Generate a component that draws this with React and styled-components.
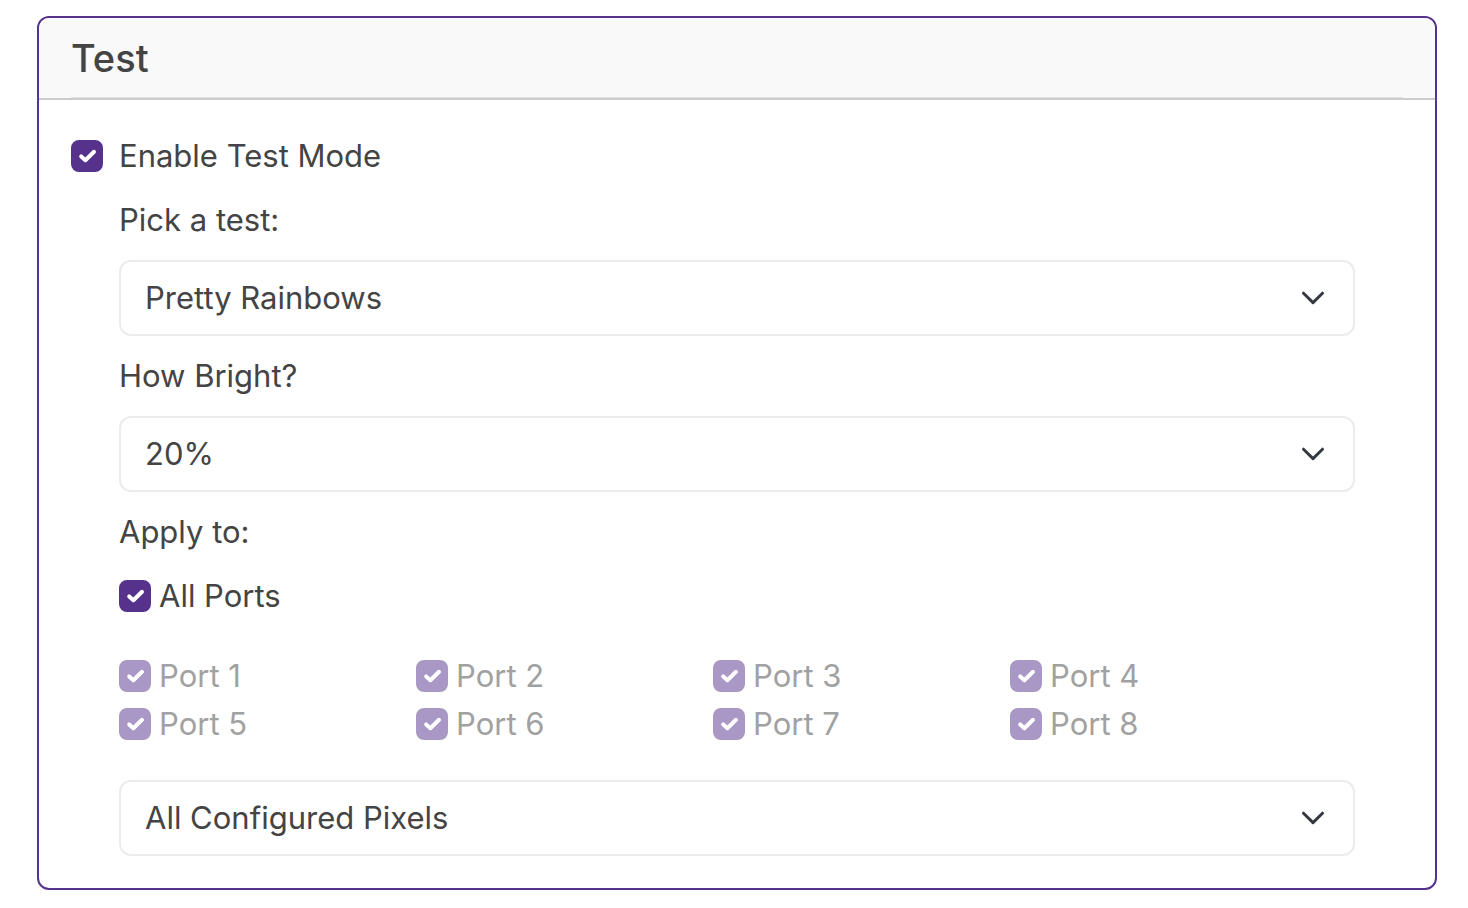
import React, { useState } from "react";
import styled, { createGlobalStyle, css } from "styled-components";

const GlobalStyle = createGlobalStyle`
  *, *::before, *::after { box-sizing: border-box; }
  body {
    margin: 0;
    background: #fff;
    color: #444;
    font-family: Inter, "Liberation Sans", sans-serif;
    font-size: 31px;
    line-height: 48px;
  }
`;

const Page = styled.main`
  padding: 16px 31px 16px 37px;
`;

const Card = styled.section`
  border: 2px solid #56328c;
  border-radius: 12px;
  background: #fff;
  overflow: hidden;
`;

const CardHeader = styled.header`
  padding: 16px 32px 0;
  background: #f9f9f9;
  border-bottom: 2px solid #ccc;
`;

const Title = styled.h1`
  margin: 0;
  padding-bottom: 15px;
  border-bottom: 1px solid #e2e2e2;
  font-size: 38px;
  line-height: 48px;
  font-weight: 500;
`;

const CardBody = styled.form`
  padding: 32px;
`;

const Settings = styled.div`
  padding: 16px 48px 0;
  display: flex;
  flex-direction: column;
`;

const Field = styled.div`
  display: flex;
  flex-direction: column;
  gap: 16px;
  margin-bottom: 16px;
`;

const FieldLabel = styled.label`
  display: block;
`;

const SelectBox = styled.div`
  display: grid;
  align-items: center;

  > * { grid-area: 1 / 1; }
`;

const Select = styled.select`
  appearance: none;
  width: 100%;
  height: 76px;
  padding: 0 72px 0 24px;
  border: 2px solid #ececec;
  border-radius: 12px;
  background: #fff;
  color: inherit;
  font: inherit;
`;

const Chevron = styled.svg`
  width: 24px;
  height: 24px;
  margin-right: 30px;
  justify-self: end;
  pointer-events: none;
`;

const CheckRow = styled.label`
  display: flex;
  align-items: center;
  gap: ${(p) => (p.$wide ? 16 : 8)}px;
  ${(p) => p.$disabled && css`color: #a1a1a1;`}
`;

const CheckBox = styled.span`
  display: grid;
  flex: none;
  width: 32px;
  height: 32px;

  > * { grid-area: 1 / 1; }
`;

const CheckInput = styled.input`
  appearance: none;
  width: 32px;
  height: 32px;
  margin: 0;
  border: 2px solid #56328c;
  border-radius: 8px;
  background: #fff;

  &:checked { background: #56328c; }
  &:disabled { opacity: 0.5; }
`;

const Tick = styled.svg`
  z-index: 1;
  width: 32px;
  height: 32px;
  pointer-events: none;
`;

const Ports = styled.div`
  display: grid;
  grid-template-columns: repeat(4, 1fr);
  margin: 16px 48px 32px 0;
`;

function Check({ label, wide, disabled, checked, onChange }) {
  return (
    <CheckRow $wide={wide} $disabled={disabled}>
      <CheckBox>
        <CheckInput type="checkbox" checked={checked} disabled={disabled} onChange={(e) => onChange(e.target.checked)} />
        {checked && (
          <Tick viewBox="0 0 32 32" fill="none" stroke="#fff" strokeWidth="4" strokeLinecap="round" strokeLinejoin="round" aria-hidden="true">
            <path d="M10.2 16.4 14.4 20.2 23 11.8" />
          </Tick>
        )}
      </CheckBox>
      <span>{label}</span>
    </CheckRow>
  );
}

function Dropdown({ id, options, ...rest }) {
  return (
    <SelectBox>
      <Select id={id} {...rest}>
        {options.map((o) => <option key={o}>{o}</option>)}
      </Select>
      <Chevron viewBox="0 0 24 24" fill="none" stroke="#343a40" strokeWidth="3" strokeLinecap="round" strokeLinejoin="round" aria-hidden="true">
        <path d="m2.5 7.2 9.5 9.4 9.5-9.4" />
      </Chevron>
    </SelectBox>
  );
}

const PORTS = [1, 2, 3, 4, 5, 6, 7, 8];

export default function App() {
  const [enabled, setEnabled] = useState(true);
  const [allPorts, setAllPorts] = useState(true);
  const [ports, setPorts] = useState(PORTS);

  const togglePort = (n, on) => setPorts(on ? [...ports, n] : ports.filter((p) => p !== n));

  return (
    <>
      <GlobalStyle />
      <Page>
        <Card>
          <CardHeader>
            <Title>Test</Title>
          </CardHeader>
          <CardBody>
            <Check label="Enable Test Mode" wide checked={enabled} onChange={setEnabled} />
            <Settings>
              <Field>
                <FieldLabel htmlFor="test">Pick a test:</FieldLabel>
                <Dropdown id="test" options={["Pretty Rainbows"]} />
              </Field>
              <Field>
                <FieldLabel htmlFor="brightness">How Bright?</FieldLabel>
                <Dropdown id="brightness" options={["20%"]} />
              </Field>
              <Field>
                <FieldLabel as="div">Apply to:</FieldLabel>
                <Check label="All Ports" checked={allPorts} onChange={setAllPorts} />
              </Field>
              <Ports>
                {PORTS.map((n) => (
                  <Check
                    key={n}
                    label={`Port ${n}`}
                    disabled={allPorts}
                    checked={allPorts || ports.includes(n)}
                    onChange={(on) => togglePort(n, on)}
                  />
                ))}
              </Ports>
              <Dropdown id="pixels" aria-label="Pixels to test" options={["All Configured Pixels"]} />
            </Settings>
          </CardBody>
        </Card>
      </Page>
    </>
  );
}
